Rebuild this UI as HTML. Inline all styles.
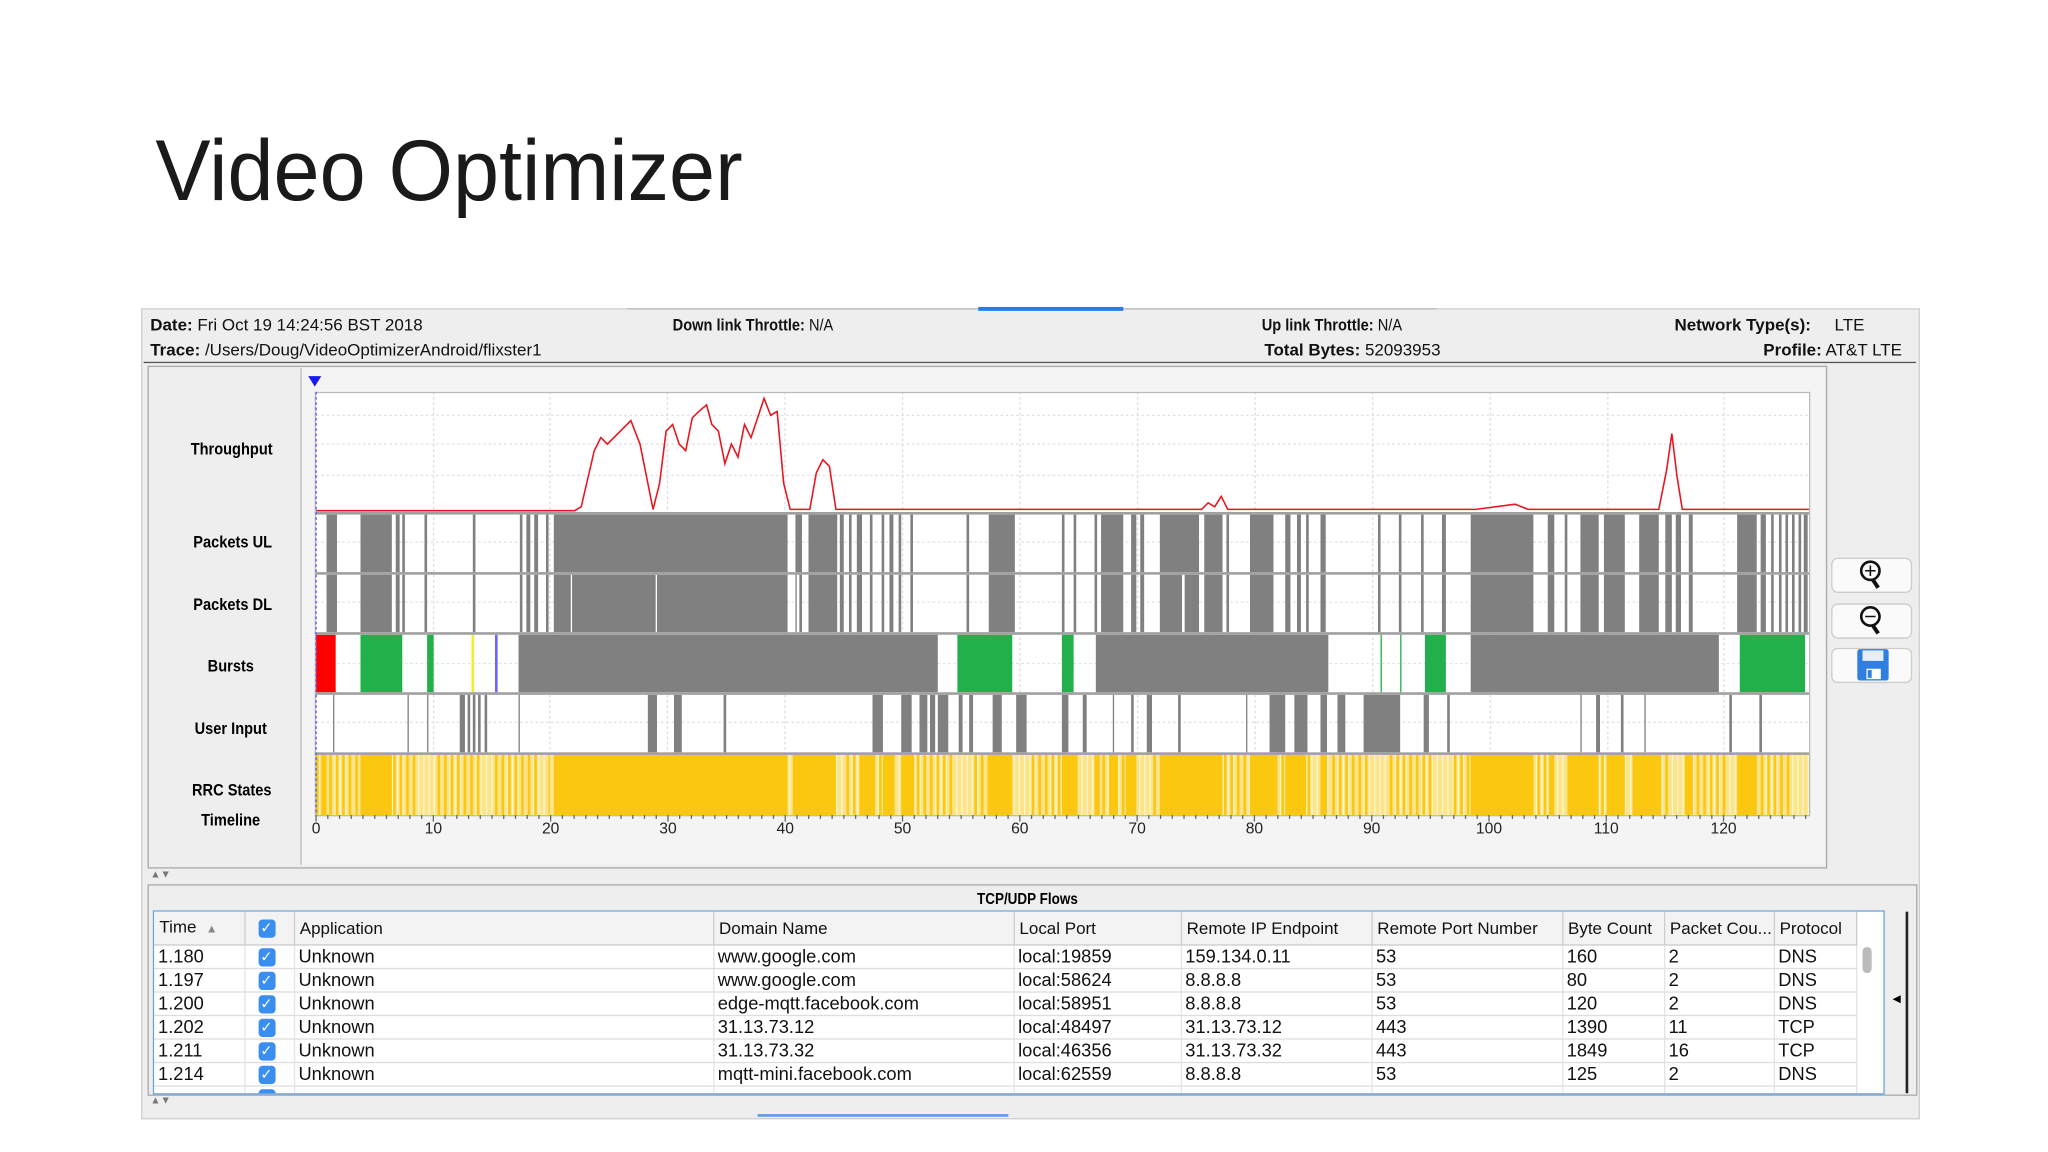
<!DOCTYPE html>
<html><head><meta charset="utf-8"><style>
html,body{margin:0;padding:0;background:#fff;width:2048px;height:1152px;overflow:hidden}
#s{position:absolute;left:0;top:0;width:1568px;height:882px;transform:scale(1.306122);transform-origin:0 0;font-family:"Liberation Sans",sans-serif}
.t{position:absolute;white-space:nowrap}
.n{transform:scaleX(0.86);transform-origin:0 0}
.hd{font-size:13px;color:#111}
.tb{position:absolute;left:117px;top:697px;width:1324px;height:139px;background:#fff;border:1px solid #6aa4e0;overflow:hidden}
.tb table{border-collapse:collapse;font-size:14px;color:#111;table-layout:fixed}
.tb td{height:17px;border-bottom:1px solid #ddd;border-right:1px solid #e4e4e4;padding:0 0 0 3px;white-space:nowrap;overflow:hidden;line-height:17px}
.tb tr.h td{height:24px;line-height:24px;background:#f3f3f3;border-right:1px solid #ccc;border-bottom:1px solid #ccc;font-size:13px;padding-left:4px}
.cb{display:inline-block;width:13px;height:14px;background:#3a8ef0;border-radius:3px;color:#fff;font-size:11px;line-height:14px;text-align:center;vertical-align:middle}
.btn{position:absolute;left:1402px;width:60px;height:25px;border:1px solid #ccc;border-radius:5px;background:#fafafa}
</style></head><body><div id="s">
<div class="t" style="left:119px;top:92px;font-size:66px;color:#1a1a1a;transform:scaleX(0.96);transform-origin:0 0">Video Optimizer</div>
<div style="position:absolute;left:108px;top:236px;width:1360px;height:619px;background:#eeeeee;border:1px solid #d0d0d0"></div>
<div style="position:absolute;left:480px;top:236px;width:620px;height:1px;background:#bbb"></div>
<div style="position:absolute;left:749px;top:235px;width:111px;height:3px;background:#2a7ae0"></div>
<div class="t hd" style="left:115px;top:241px"><b>Date:</b> Fri Oct 19 14:24:56 BST 2018</div>
<div class="t hd" style="left:115px;top:260px"><b>Trace:</b> /Users/Doug/VideoOptimizerAndroid/flixster1</div>
<div class="t hd n" style="left:515px;top:241px"><b>Down link Throttle:</b> N/A</div>
<div class="t hd n" style="left:966px;top:241px"><b>Up link Throttle:</b> N/A</div>
<div class="t hd" style="left:968px;top:260px"><b>Total Bytes:</b> 52093953</div>
<div class="t hd" style="left:1282px;top:241px"><b>Network Type(s):</b>&nbsp;&nbsp;&nbsp;&nbsp; LTE</div>
<div class="t hd" style="left:1350px;top:260px"><b>Profile:</b> AT&amp;T LTE</div>
<div style="position:absolute;left:110px;top:277px;width:1357px;height:1px;background:#555"></div>
<div style="position:absolute;left:113px;top:280px;width:1284px;height:383px;border:1px solid #aaa;background:#eeeeee"></div>
<div style="position:absolute;left:230px;top:282px;width:1166px;height:380px;background:#f4f4f4;border-left:1px solid #bbb"></div>
<div class="t n" style="left:146px;top:336px;font-size:13px;font-weight:bold">Throughput</div>
<div class="t n" style="left:148px;top:407px;font-size:13px;font-weight:bold">Packets UL</div>
<div class="t n" style="left:148px;top:455px;font-size:13px;font-weight:bold">Packets DL</div>
<div class="t n" style="left:159px;top:502px;font-size:13px;font-weight:bold">Bursts</div>
<div class="t n" style="left:149px;top:550px;font-size:13px;font-weight:bold">User Input</div>
<div class="t n" style="left:147px;top:597px;font-size:13px;font-weight:bold">RRC States</div>
<div class="t n" style="left:154px;top:620px;font-size:13px;font-weight:bold">Timeline</div>
<svg id="ch" style="position:absolute;left:0;top:0" width="1568" height="882"></svg>
<div class="btn" style="top:427px"></div><div class="btn" style="top:462px"></div><div class="btn" style="top:496px"></div>
<svg style="position:absolute;left:1420px;top:427px" width="30" height="100">
<circle cx="12" cy="10" r="7" fill="none" stroke="#111" stroke-width="2"/><path d="M12 6v8M8 10h8" stroke="#111" stroke-width="1.2"/><path d="M14 17l4 6" stroke="#111" stroke-width="3"/>
<circle cx="12" cy="45" r="7" fill="none" stroke="#111" stroke-width="2"/><path d="M8 45h8" stroke="#111" stroke-width="1.2"/><path d="M14 52l4 6" stroke="#111" stroke-width="3"/>
<rect x="2" y="70" width="24" height="24" rx="2" fill="#2f7fe0"/><rect x="6" y="71" width="16" height="8" fill="#e8eef8"/><rect x="9" y="85" width="11" height="8" fill="#fff"/><rect x="10" y="86" width="3" height="6" fill="#2f7fe0"/>
</svg>
<div class="t" style="left:115px;top:665px;font-size:8px;color:#777">▲▼</div>
<div style="position:absolute;left:113px;top:677px;width:1353px;height:160px;border:1px solid #aaa;background:#eee"></div>
<div class="t n" style="left:748px;top:681px;font-size:12px;font-weight:bold">TCP/UDP Flows</div>
<div class="tb"><table>
<colgroup><col style="width:69px"><col style="width:38px"><col style="width:321px"><col style="width:230px"><col style="width:128px"><col style="width:146px"><col style="width:146px"><col style="width:78px"><col style="width:84px"><col style="width:63px"></colgroup>
<tr class="h"><td>Time &nbsp;<span style="font-size:9px;color:#888">▲</span></td><td style="padding-left:10px"><span class="cb">✓</span></td><td>Application</td><td>Domain Name</td><td>Local Port</td><td>Remote IP Endpoint</td><td>Remote Port Number</td><td>Byte Count</td><td>Packet Cou...</td><td>Protocol</td></tr>
<tr><td>1.180</td><td style="padding-left:10px"><span class="cb">✓</span></td><td>Unknown</td><td>www.google.com</td><td>local:19859</td><td>159.134.0.11</td><td>53</td><td>160</td><td>2</td><td>DNS</td></tr>
<tr><td>1.197</td><td style="padding-left:10px"><span class="cb">✓</span></td><td>Unknown</td><td>www.google.com</td><td>local:58624</td><td>8.8.8.8</td><td>53</td><td>80</td><td>2</td><td>DNS</td></tr>
<tr><td>1.200</td><td style="padding-left:10px"><span class="cb">✓</span></td><td>Unknown</td><td>edge-mqtt.facebook.com</td><td>local:58951</td><td>8.8.8.8</td><td>53</td><td>120</td><td>2</td><td>DNS</td></tr>
<tr><td>1.202</td><td style="padding-left:10px"><span class="cb">✓</span></td><td>Unknown</td><td>31.13.73.12</td><td>local:48497</td><td>31.13.73.12</td><td>443</td><td>1390</td><td>11</td><td>TCP</td></tr>
<tr><td>1.211</td><td style="padding-left:10px"><span class="cb">✓</span></td><td>Unknown</td><td>31.13.73.32</td><td>local:46356</td><td>31.13.73.32</td><td>443</td><td>1849</td><td>16</td><td>TCP</td></tr>
<tr><td>1.214</td><td style="padding-left:10px"><span class="cb">✓</span></td><td>Unknown</td><td>mqtt-mini.facebook.com</td><td>local:62559</td><td>8.8.8.8</td><td>53</td><td>125</td><td>2</td><td>DNS</td></tr>
<tr><td>&nbsp;</td><td style="padding-left:10px"><span class="cb">✓</span></td><td></td><td></td><td></td><td></td><td></td><td></td><td></td><td></td></tr>
</table>
<div style="position:absolute;left:1308px;top:27px;width:7px;height:20px;background:#bbb;border-radius:4px"></div>
</div>
<div style="position:absolute;left:1459px;top:698px;width:2px;height:139px;background:#222"></div>
<div class="t" style="left:1449px;top:760px;font-size:8px">◀</div>
<div class="t" style="left:115px;top:838px;font-size:8px;color:#777">▲▼</div>
<div style="position:absolute;left:580px;top:853px;width:192px;height:2px;background:#5a9ae8"></div>
</div>
<script>
var s=document.getElementById('ch'),h='';
function r(x,y,w,hh,c){h+='<rect x="'+x+'" y="'+y+'" width="'+w+'" height="'+hh+'" fill="'+c+'"/>';}
r(241,300,1144,324,'#fff');
var gx=[332,421,511,601,691,781,871,961,1051,1141,1231,1320];
gx.forEach(function(x){h+='<line x1="'+x+'" y1="300" x2="'+x+'" y2="624" stroke="#ddd" stroke-dasharray="2,2"/>';});
[318,340,364,415,461,508,553,600].forEach(function(y){h+='<line x1="242" y1="'+y+'" x2="1385" y2="'+y+'" stroke="#e2e2e2" stroke-dasharray="2,2"/>';});
var ul=[[250,258],[276,300],[303,306],[308,310],[325,327],[362,364],[398,400],[403,406],[409,412],[418,420],[424,603],[609,614],[619,641],[643,646],[650,652],[656,660],[666,668],[675,677],[681,684],[688,690],[697,699],[740,742],[757,777],[813,815],[822,824],[838,840],[843,860],[866,870],[873,876],[888,918],[922,936],[939,941],[957,975],[984,988],[993,996],[1000,1002],[1011,1015],[1055,1057],[1071,1073],[1088,1090],[1104,1107],[1126,1174],[1185,1190],[1198,1200],[1210,1224],[1228,1244],[1255,1270],[1275,1280],[1283,1287],[1293,1296],[1330,1345],[1348,1352],[1356,1358],[1362,1364],[1367,1369],[1372,1374],[1377,1379],[1381,1384]];
ul.forEach(function(a){r(a[0],394,a[1]-a[0],44,'#808080');r(a[0],440,a[1]-a[0],44,'#808080');});
r(437,440,1,44,'#fff');r(502,440,1,44,'#fff');r(610,440,2,44,'#fff');r(905,440,2,44,'#fff');
var b=[[242,257,'#f00'],[276,308,'#22b04a'],[327,332,'#22b04a'],[361,363,'#ee3'],[379,381,'#66f'],[397,718,'#808080'],[733,775,'#22b04a'],[813,822,'#22b04a'],[839,1017,'#808080'],[1057,1058,'#22b04a'],[1072,1073,'#22b04a'],[1091,1107,'#22b04a'],[1126,1316,'#808080'],[1332,1382,'#22b04a']];
b.forEach(function(a){r(a[0],486,a[1]-a[0],44,a[2]);});
var u=[[255,256],[312,313],[327,328],[352,356],[358,360],[362,364],[366,368],[371,373],[397,398],[496,503],[516,522],[554,556],[668,676],[690,698],[704,710],[712,716],[718,726],[734,737],[742,745],[760,767],[778,786],[813,818],[829,832],[852,853],[866,868],[878,882],[902,904],[954,955],[972,984],[991,1001],[1011,1016],[1024,1030],[1044,1072],[1090,1094],[1108,1110],[1210,1211],[1222,1225],[1241,1243],[1259,1260],[1324,1326],[1347,1349]];
u.forEach(function(a){r(a[0],532,a[1]-a[0],44,'#808080');});
r(242,578,1143,46,'#fbe489');
for(var x=244;x<1385;x+=4){r(x,578,1,46,'#fff6c8');}
for(var i=0;i<160;i++){var x=242+((i*137)%1140);r(x,578,2,46,'#fcc70f');}
var rr=[[246,250],[276,300],[420,421],[424,603],[607,640],[648,650],[660,668],[676,684],[690,700],[757,775],[813,825],[838,842],[850,855],[862,870],[888,936],[957,976],[984,1000],[1011,1016],[1126,1174],[1186,1190],[1200,1224],[1230,1244],[1250,1270],[1290,1296],[1330,1345]];
rr.forEach(function(a){r(a[0],578,a[1]-a[0],46,'#fcc70f');});
[392,438,484,530,576].forEach(function(y){r(241,y,1144,2,'#a0a0a0');});
h+='<rect x="241.5" y="300.5" width="1144" height="324" fill="none" stroke="#bbb"/>';
h+='<line x1="242" y1="300" x2="242" y2="624" stroke="#55f" stroke-dasharray="2,2"/>';
var p=[[242,391],[440,391],[445,388],[455,345],[460,335],[465,340],[470,335],[475,330],[483,322],[490,340],[500,390],[505,370],[510,330],[515,325],[520,340],[525,345],[530,320],[535,315],[541,310],[545,325],[550,330],[555,355],[560,340],[565,350],[570,325],[575,335],[580,320],[585,305],[590,318],[595,315],[600,370],[605,390],[620,390],[625,362],[630,352],[635,357],[640,390],[920,390],[925,385],[930,388],[935,380],[940,390],[1130,390],[1160,386],[1170,390],[1270,390],[1276,360],[1280,332],[1284,365],[1288,390],[1385,390]];
h+='<polyline fill="none" stroke="#e8141e" stroke-width="1.2" points="'+p.map(function(a){return a.join(',')}).join(' ')+'"/>';
for(var t=0;t<=127;t++){var x=242+t*8.98;h+='<line x1="'+x+'" y1="624" x2="'+x+'" y2="'+(t%10?627:629)+'" stroke="#666"/>';}
for(var k=0;k<=12;k++){var x=242+k*89.8;h+='<text x="'+x+'" y="638" font-size="12" text-anchor="middle" font-family="Liberation Sans,sans-serif" fill="#222">'+(k*10)+'</text>';}
h+='<polygon points="236,288 246,288 241,296" fill="#1a1aee"/>';
s.innerHTML=h;
</script>
</body></html>
